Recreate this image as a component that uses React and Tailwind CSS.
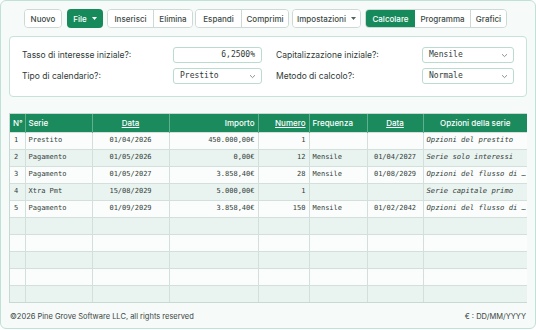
import React from "react";

const sans = { fontFamily: "Inter, 'Liberation Sans', sans-serif" };
const mono = { fontFamily: "'DejaVu Sans Mono', 'Liberation Mono', monospace" };

function Caret({ color }) {
  return (
    <svg width="5" height="3" viewBox="0 0 5 3" className="ml-[5px]">
      <path d="M0 0 L5 0 L2.5 3 Z" fill={color} />
    </svg>
  );
}

function Btn({ children, green, caret, w, cls = "" }) {
  return (
    <div
      className={
        "flex h-full items-center justify-center text-[8px] font-medium " +
        (green ? "bg-[#178a5c] text-white " : "bg-white text-[#3d4a46] ") +
        w +
        " " +
        cls
      }
    >
      {children}
      {caret && <Caret color={green ? "#ffffff" : "#55625e"} />}
    </div>
  );
}

function Chevron() {
  return (
    <svg width="7" height="5" viewBox="0 0 7 5" className="ml-auto">
      <path d="M1 1.2 L3.5 3.6 L6 1.2" fill="none" stroke="#7a8a86" strokeWidth="0.9" />
    </svg>
  );
}

function Select({ value, w }) {
  return (
    <div
      className={"flex h-[16px] items-center rounded-[3px] border border-[#b9dccf] bg-white pl-[6px] pr-[5px] text-[8px] text-[#2f3a37] " + w}
      style={mono}
    >
      {value}
      <Chevron />
    </div>
  );
}

const rows = [
  ["1", "Prestito", "01/04/2026", "450.000,00€", "1", "", "", "Opzioni del prestito"],
  ["2", "Pagamento", "01/05/2026", "0,00€", "12", "Mensile", "01/04/2027", "Serie solo interessi"],
  ["3", "Pagamento", "01/05/2027", "3.858,40€", "28", "Mensile", "01/08/2029", "Opzioni del flusso di …"],
  ["4", "Xtra Pmt", "15/08/2029", "5.000,00€", "1", "", "", "Serie capitale primo"],
  ["5", "Pagamento", "01/09/2029", "3.858,40€", "150", "Mensile", "01/02/2042", "Opzioni del flusso di …"],
];
while (rows.length < 10) rows.push(["", "", "", "", "", "", "", ""]);

const widths = [15, 67, 77, 89, 51, 58, 56, 104];

const grp = "flex h-[19px] overflow-hidden rounded-[4px] border border-[#cdd9d5]";

export default function App() {
  return (
    <div className="h-[330px] w-[536px] bg-white" style={sans}>
      <div className="flex h-[329px] w-[536px] flex-col rounded-[6px] border border-[#bfe1d6] bg-[#f6faf9] px-[8px] pt-[8px]">
        {/* toolbar */}
        <div className="flex h-[19px] items-center pl-[15px]">
          <div className={grp}>
            <Btn w="w-[36px]">Nuovo</Btn>
          </div>
          <div className="ml-[5px] flex h-[19px] overflow-hidden rounded-[4px]">
            <Btn green caret w="w-[36px]">File</Btn>
          </div>
          <div className={"ml-[4px] " + grp}>
            <Btn w="w-[45px]">Inserisci</Btn>
            <Btn w="w-[39px]" cls="border-l border-[#cdd9d5]">Elimina</Btn>
          </div>
          <div className={"ml-[2px] " + grp}>
            <Btn w="w-[45px]">Espandi</Btn>
            <Btn w="w-[47px]" cls="border-l border-[#cdd9d5]">Comprimi</Btn>
          </div>
          <div className={"ml-[3px] " + grp}>
            <Btn caret w="w-[67px]">Impostazioni</Btn>
          </div>
          <div className={"ml-[4px] " + grp}>
            <Btn green w="w-[49px]">Calcolare</Btn>
            <Btn w="w-[55px]">Programma</Btn>
            <Btn w="w-[36px]" cls="border-l border-[#cdd9d5]">Grafici</Btn>
          </div>
        </div>

        {/* form */}
        <div className="mt-[8px] flex h-[61px] rounded-[4px] border border-[#c5e3d9] bg-white pl-[12px] pr-[12px] pt-[10px]">
          <div className="flex w-[240px] flex-col gap-[5px]">
            <div className="flex items-center text-[8.5px] text-[#2f3a37]">
              <span className="w-[151px]">Tasso di interesse iniziale?:</span>
              <div
                className="flex h-[16px] w-[89px] items-center justify-end rounded-[3px] border border-[#b9dccf] bg-white pr-[6px] text-[8px] text-[#2f3a37]"
                style={mono}
              >
                6,2500%
              </div>
            </div>
            <div className="flex items-center text-[8.5px] text-[#2f3a37]">
              <span className="w-[151px]">Tipo di calendario?:</span>
              <Select value="Prestito" w="w-[89px]" />
            </div>
          </div>
          <div className="ml-[14px] flex w-[238px] flex-col gap-[5px]">
            <div className="flex items-center text-[8.5px] text-[#2f3a37]">
              <span className="w-[146px]">Capitalizzazione iniziale?:</span>
              <Select value="Mensile" w="w-[92px]" />
            </div>
            <div className="flex items-center text-[8.5px] text-[#2f3a37]">
              <span className="w-[146px]">Metodo di calcolo?:</span>
              <Select value="Normale" w="w-[92px]" />
            </div>
          </div>
        </div>

        {/* table */}
        <div className="mt-[16px] border border-[#c9d8d3]">
          <table className="w-[517px] table-fixed border-collapse">
            <colgroup>
              {widths.map((w, i) => (
                <col key={i} style={{ width: w }} />
              ))}
            </colgroup>
            <thead>
              <tr className="h-[18px] bg-[#1b8b5e] text-[8px] font-medium text-white">
                <th className="px-[3px] text-left font-medium">N°</th>
                <th className="border-l border-[#5fb08e] px-[3px] text-left font-medium">Serie</th>
                <th className="border-l border-[#5fb08e] text-center font-medium underline">Data</th>
                <th className="border-l border-[#5fb08e] px-[3px] text-right font-medium">Importo</th>
                <th className="border-l border-[#5fb08e] px-[3px] text-right font-medium underline">Numero</th>
                <th className="border-l border-[#5fb08e] px-[3px] text-left font-medium">Frequenza</th>
                <th className="border-l border-[#5fb08e] text-center font-medium underline">Data</th>
                <th className="border-l border-[#5fb08e] text-center font-medium">Opzioni della serie</th>
              </tr>
            </thead>
            <tbody className="text-[7px] text-[#333d3a]" style={mono}>
              {rows.map((r, i) => (
                <tr key={i} className={"h-[17px] border-t border-[#d3dfdb] " + (i % 2 ? "bg-[#e9f3f0]" : "bg-[#fafdfc]")}>
                  <td className="px-[4px] text-left">{r[0]}</td>
                  <td className="border-l border-[#d3dfdb] px-[3px]">{r[1]}</td>
                  <td className="border-l border-[#d3dfdb] text-center">{r[2]}</td>
                  <td className="border-l border-[#d3dfdb] px-[3px] text-right">{r[3]}</td>
                  <td className="border-l border-[#d3dfdb] px-[3px] text-right">{r[4]}</td>
                  <td className="border-l border-[#d3dfdb] px-[3px]">{r[5]}</td>
                  <td className="border-l border-[#d3dfdb] text-center">{r[6]}</td>
                  <td className="whitespace-nowrap border-l border-[#d3dfdb] pl-[3px] text-[7.2px] italic">{r[7]}</td>
                </tr>
              ))}
            </tbody>
          </table>
        </div>

        {/* footer */}
        <div className="mt-[8px] flex items-center justify-between px-[1px] text-[7.5px] text-[#3a4542]">
          <span>©2026 Pine Grove Software LLC, all rights reserved</span>
          <span>€ : DD/MM/YYYY</span>
        </div>
      </div>
    </div>
  );
}
